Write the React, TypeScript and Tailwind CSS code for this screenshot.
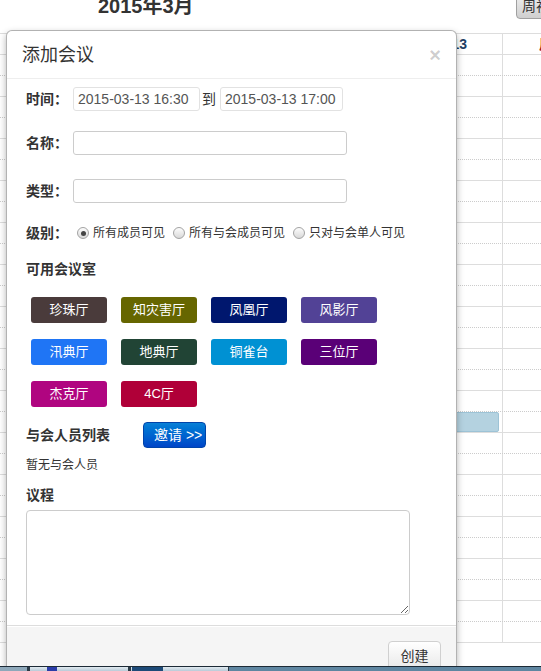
import React from "react";

const rooms = [
  { name: "珍珠厅", cls: "bg-[#4a3b3b]" },
  { name: "知灾害厅", cls: "bg-[#666600]" },
  { name: "凤凰厅", cls: "bg-[#00176e]" },
  { name: "风影厅", cls: "bg-[#524296]" },
  { name: "汛典厅", cls: "bg-[#1f75f5]" },
  { name: "地典厅", cls: "bg-[#214435]" },
  { name: "铜雀台", cls: "bg-[#0091d3]" },
  { name: "三位厅", cls: "bg-[#5a0077]" },
  { name: "杰克厅", cls: "bg-[#b00580]" },
  { name: "4C厅", cls: "bg-[#b00038]" },
];

const levels = [
  { label: "所有成员可见", checked: true },
  { label: "所有与会成员可见", checked: false },
  { label: "只对与会单人可见", checked: false },
];

const Radio = ({ checked }: { checked: boolean }) => (
  <span className="w-[12px] h-[12px] shrink-0 rounded-full border border-[#a3a3a3] bg-linear-to-b from-[#fdfdfd] to-[#d9d9d9] flex items-center justify-center">
    {checked && <span className="w-[5px] h-[5px] rounded-full bg-[#454545]" />}
  </span>
);

const Label = ({ text }: { text: string }) => (
  <span className="w-[47px] shrink-0 text-[14px] font-bold text-[#333]">{text}</span>
);

const Calendar = () => {
  const rows = Array.from({ length: 28 }, (_, i) => i);
  return (
    <div>
      <div className="h-[33px] flex items-start overflow-hidden">
        <h2 className="pl-[98px] -mt-[4px] text-[20px] leading-[20px] font-bold text-[#333]">
          2015年3月
        </h2>
        <div className="ml-auto -mr-[20px] -mt-[7px] h-[26px] w-[45px] pl-[5px] shrink-0 flex items-center rounded-[4px] border border-[#a0a0a0] bg-linear-to-b from-[#f0f0f0] to-[#cfcfcf] text-[14px] text-[#333] overflow-hidden whitespace-nowrap">
          周视图
        </div>
      </div>
      <div className="border-t border-[#ddd]">
        <div className="h-[21px] flex border-b border-[#ddd]">
          <div className="w-[503px] border-r border-[#ddd] flex items-center justify-end pr-[35px] text-[14px] font-bold text-[#1f3f66]">
            3/13
          </div>
          <div className="flex-1 flex items-center pl-[36px] overflow-hidden whitespace-nowrap text-[14px] font-bold text-[#9b1c1c]">
            周六
          </div>
        </div>
        {rows.map((i) => (
          <div
            key={i}
            className={
              i % 2 === 0
                ? "h-[21px] flex border-b border-dotted border-[#ccc]"
                : "h-[21px] flex border-b border-solid border-[#ddd]"
            }
          >
            <div className="relative w-[503px] border-r border-solid border-[#ddd]">
              {i === 17 && (
                <div className="absolute top-0 bottom-0 left-[300px] right-[3px] bg-[#b4d2e0] border border-[#9dc3d6] rounded-[2px]" />
              )}
            </div>
            <div className="flex-1" />
          </div>
        ))}
      </div>
    </div>
  );
};

const Modal = () => (
  <div className="absolute left-[6px] top-[30px] w-[451px] h-[660px] flex flex-col bg-white border border-black/30 rounded-[6px] shadow-[0_3px_7px_rgba(0,0,0,0.3)] overflow-hidden">
    <div className="h-[48px] shrink-0 flex items-center justify-between px-[15px] border-b border-[#eee]">
      <h3 className="text-[18px] leading-[30px] text-[#333]">添加会议</h3>
      <span className="text-[20px] leading-none font-bold text-black/20">×</span>
    </div>

    <div className="h-[546px] shrink-0 pl-[19px] pt-[8px] flex flex-col items-start">
      <div className="h-[24px] flex items-center">
        <Label text="时间：" />
        <input
          readOnly
          defaultValue="2015-03-13 16:30"
          className="w-[127px] h-[24px] px-[4px] border border-[#e2e2e2] rounded-[3px] text-[14px] text-[#555] outline-none"
        />
        <span className="ml-[2px] mr-[4px] text-[14px] text-[#333]">到</span>
        <input
          readOnly
          defaultValue="2015-03-13 17:00"
          className="w-[123px] h-[24px] px-[4px] border border-[#e2e2e2] rounded-[3px] text-[14px] text-[#555] outline-none"
        />
      </div>

      <div className="mt-[20px] h-[24px] flex items-center">
        <Label text="名称：" />
        <input className="w-[274px] h-[24px] px-[4px] border border-[#ccc] rounded-[3px] text-[14px] text-[#555] outline-none" />
      </div>

      <div className="mt-[24px] h-[24px] flex items-center">
        <Label text="类型：" />
        <input className="w-[274px] h-[24px] px-[4px] border border-[#ccc] rounded-[3px] text-[14px] text-[#555] outline-none" />
      </div>

      <div className="mt-[18px] h-[24px] flex items-center">
        <Label text="级别：" />
        <div className="ml-[4px] flex items-center gap-[8px]">
          {levels.map((l) => (
            <div key={l.label} className="flex items-center gap-[4px]">
              <Radio checked={l.checked} />
              <span className="text-[12px] text-[#333]">{l.label}</span>
            </div>
          ))}
        </div>
      </div>

      <div className="mt-[14px] text-[14px] leading-[20px] font-bold text-[#333]">可用会议室</div>

      <div className="mt-[18px] ml-[5px] grid grid-cols-[repeat(4,76px)] gap-x-[14px] gap-y-[16px]">
        {rooms.map((r) => (
          <div
            key={r.name}
            className={`${r.cls} h-[26px] rounded-[3px] flex items-center justify-center text-[13px] text-white`}
          >
            {r.name}
          </div>
        ))}
      </div>

      <div className="mt-[15px] h-[26px] flex items-center">
        <span className="w-[117px] text-[14px] font-bold text-[#333]">与会人员列表</span>
        <button className="w-[63px] h-[26px] pl-[10px] flex items-center rounded-[4px] border border-[#0044aa] bg-linear-to-b from-[#0a80d6] to-[#0045c8] text-[14px] text-white">
          邀请 &gt;&gt;
        </button>
      </div>

      <div className="mt-[8px] text-[12px] leading-[18px] text-[#333]">暂无与会人员</div>

      <div className="mt-[11px] text-[14px] leading-[20px] font-bold text-[#333]">议程</div>

      <textarea className="mt-[5px] w-[384px] h-[105px] border border-[#ccc] rounded-[4px] outline-none" />
    </div>

    <div className="flex-1 flex justify-end items-start pt-[15px] pr-[15px] bg-[#f5f5f5] border-t border-[#ddd] shadow-[inset_0_1px_0_#fff]">
      <button className="w-[53px] h-[30px] rounded-[4px] border border-[#d0d0d0] bg-linear-to-b from-white to-[#e8e8e8] text-[14px] text-[#333]">
        创建
      </button>
    </div>
  </div>
);

const Taskbar = () => (
  <div className="h-[5px] flex bg-[#5f86a1] border-t border-[#1c2a36]">
    <div className="w-[27px] bg-[#8ea8ba]" />
    <div className="w-[3px] bg-[#2b3a46]" />
    <div className="w-[98px] bg-linear-to-b from-[#e1eaf0] to-[#b9cbd8] flex">
      <div className="ml-[17px] w-[10px] bg-[#2a3ca8]" />
    </div>
    <div className="w-[3px] bg-[#2b3a46]" />
    <div className="w-[97px] bg-linear-to-b from-[#e1eaf0] to-[#b9cbd8] flex">
      <div className="ml-[1px] w-[31px] bg-[#1d4a78]" />
    </div>
    <div className="w-[1px] bg-[#2b3a46]" />
  </div>
);

export default function App() {
  return (
    <div className="w-[541px] h-[671px] overflow-hidden bg-white font-['Liberation_Sans','Noto_Sans_CJK_SC',sans-serif]">
      <div className="relative h-[666px] overflow-hidden">
        <Calendar />
        <Modal />
      </div>
      <Taskbar />
    </div>
  );
}
